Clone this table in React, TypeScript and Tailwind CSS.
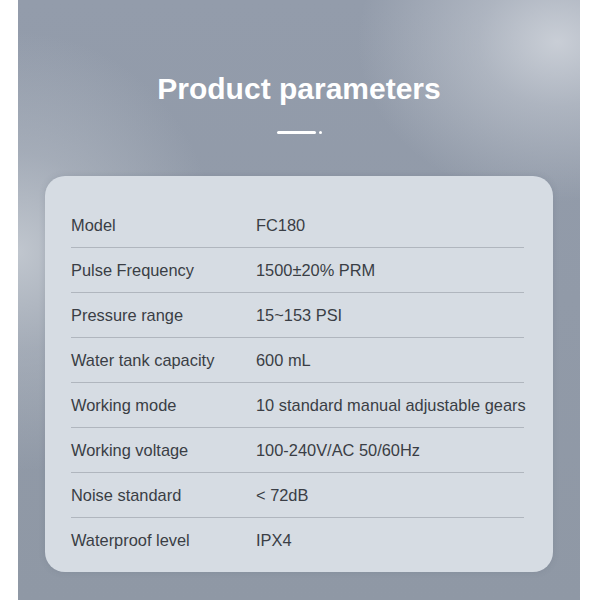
const rows: [string, string][] = [
  ["Model", "FC180"],
  ["Pulse Frequency", "1500±20% PRM"],
  ["Pressure range", "15~153 PSI"],
  ["Water tank capacity", "600 mL"],
  ["Working mode", "10 standard manual adjustable gears"],
  ["Working voltage", "100-240V/AC 50/60Hz"],
  ["Noise standard", "< 72dB"],
  ["Waterproof level", "IPX4"],
];

export default function App() {
  return (
    <div className="w-[600px] h-[600px] bg-white flex pl-[18px] pr-[20px] font-['Liberation_Sans',Arial,sans-serif]">
      {/* Gradient panel */}
      <div className="flex-1 flex flex-col items-center bg-[#8f98a5] bg-[image:radial-gradient(ellipse_200px_160px_at_96%_7%,#c9ced6_0%,rgba(201,206,214,0.5)_40%,transparent_100%),radial-gradient(ellipse_200px_220px_at_0%_42%,#c0c6ce_0%,rgba(192,198,206,0.4)_45%,transparent_100%),linear-gradient(180deg,#939cab_0%,#8f98a5_100%)]">
        <h1 className="mt-[72px] text-[30px] leading-[34px] font-bold text-white">Product parameters</h1>

        {/* Underline with dot */}
        <div className="mt-[25px] flex items-center gap-[3px]">
          <span className="w-[39px] h-[3px] rounded-full bg-white" />
          <span className="w-[3px] h-[3px] rounded-full bg-white" />
        </div>

        {/* Parameters card */}
        <div className="mt-[42px] w-[508px] rounded-[20px] bg-[#d6dce3] shadow-[0_0_6px_rgba(80,90,105,0.18)] pt-[27px] pb-[9px] pl-[26px] pr-[29px]">
          {rows.map(([label, value], i) => (
            <div
              key={label}
              className={`flex items-center h-[45px] text-[16.4px] text-[#3a3e45] ${
                i < rows.length - 1 ? "border-b border-[#b0b6be]" : ""
              }`}
            >
              <span className="w-[185px] shrink-0">{label}</span>
              <span className="whitespace-nowrap">{value}</span>
            </div>
          ))}
        </div>
      </div>
    </div>
  );
}
